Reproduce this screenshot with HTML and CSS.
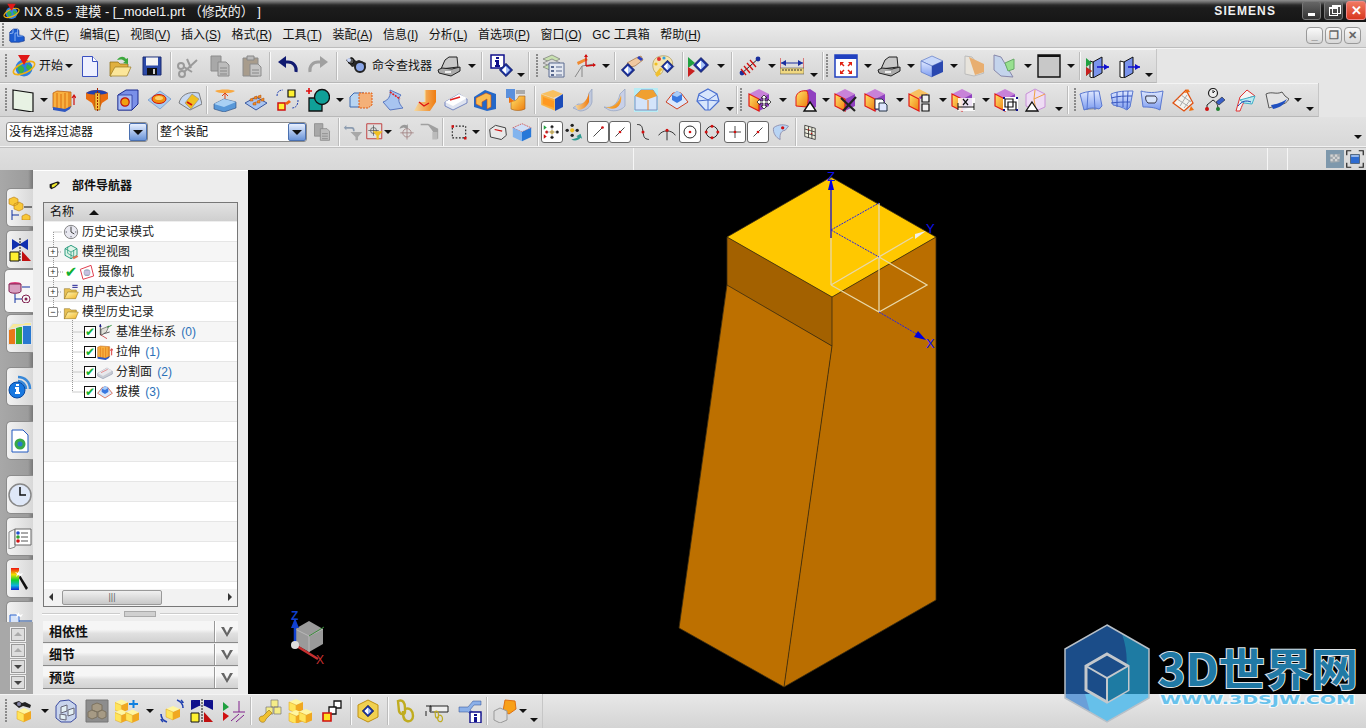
FILE: index.html
```html
<!DOCTYPE html>
<html lang="zh">
<head>
<meta charset="utf-8">
<title>NX 8.5 - 建模</title>
<link rel="stylesheet" href="styles.css">
</head>
<body>
<svg class="defs" aria-hidden="true">
<defs>
<linearGradient id="go" x1="0" y1="0" x2="1" y2="1"><stop offset="0" stop-color="#ffe468"/><stop offset="1" stop-color="#ee7c10"/></linearGradient>
<linearGradient id="gb" x1="0" y1="0" x2="1" y2="1"><stop offset="0" stop-color="#e2ecff"/><stop offset="1" stop-color="#4f7ce6"/></linearGradient>
<linearGradient id="gy" x1="0" y1="0" x2="1" y2="1"><stop offset="0" stop-color="#fff8b8"/><stop offset="1" stop-color="#f2b424"/></linearGradient>
<linearGradient id="gs" x1="0" y1="0" x2="0" y2="1"><stop offset="0" stop-color="#dfe8ff"/><stop offset="1" stop-color="#7d9cf0"/></linearGradient>
<linearGradient id="gt" x1="0" y1="0" x2="1" y2="0"><stop offset="0" stop-color="#f4d9a0"/><stop offset="1" stop-color="#f07c10"/></linearGradient>
<linearGradient id="rb" x1="0" y1="0" x2="0" y2="1"><stop offset="0" stop-color="#f01010"/><stop offset=".3" stop-color="#f0e000"/><stop offset=".55" stop-color="#10d030"/><stop offset=".8" stop-color="#10b0e0"/><stop offset="1" stop-color="#1020d0"/></linearGradient>

<symbol id="start" viewBox="0 0 24 24"><circle cx="12" cy="14" r="8.5" fill="#2f7fe0"/><path d="M6 12c3-2 5 0 6 2s-1 5-3 6c-2-1-4-5-3-8zM15 10l5 3-2 5-4-4z" fill="#38b048"/><ellipse cx="12" cy="14" rx="11.5" ry="5" fill="none" stroke="#f0b010" stroke-width="1.6" transform="rotate(-25 12 14)"/><path d="M6 1h12l-6 10z" fill="#e01818"/></symbol>
<symbol id="nxm" viewBox="0 0 24 24"><path d="M6 3h7l2 2v7l6 1 2 2v6l-8 2H3l-2-2V8z" fill="#1c5cd0" stroke="#0c2c80" stroke-width=".8"/><path d="M6 3v6l-5 1M13 9V3M9 9h4v5l8-1M9 9v12" fill="none" stroke="#a8c8f8" stroke-width="1.200"/></symbol>
<symbol id="new" viewBox="0 0 24 24"><path d="M4.500 2.500h10l5 5v15h-15z" fill="#eef0ff" stroke="#3a50c0"/><path d="M14.500 2.500v5h5" fill="#fff" stroke="#3a50c0"/></symbol>
<symbol id="open" viewBox="0 0 24 24"><path d="M2 8h8l2 2h8v4H8L4 22H2z" fill="#e0b040" stroke="#8a6a10" stroke-width=".7"/><path d="M7 13h16l-4 9H2z" fill="#fbe69a" stroke="#9a7a20" stroke-width=".7"/><path d="M9 6c3-4 7-4 9-1l2-1v6l-5-1 2-1.500C15 5 12 5 9 6z" fill="#3ca83c"/></symbol>
<symbol id="save" viewBox="0 0 24 24"><path d="M3 3h18v18H3z" fill="#2c4aa8" stroke="#1a2a70"/><path d="M6 3.500h12v8H6z" fill="#f4f4f4"/><path d="M7 14h10v7H7z" fill="#101010"/><path d="M13 15h2v5h-2z" fill="#d0d0d0"/></symbol>
<symbol id="cut" viewBox="0 0 24 24"><g fill="none" stroke="#9a9a9a" stroke-width="2"><circle cx="6" cy="20" r="3"/><circle cx="5" cy="12" r="3"/><path d="M8 18 21 6M8 13l8 5"/><path d="M11 5l4 9"/></g></symbol>
<symbol id="copy" viewBox="0 0 24 24"><path d="M3 2h10v15H3z" fill="#a8a8a8" stroke="#8c8c8c"/><path d="M10 8h8l3 3v11H10z" fill="#bcbcbc" stroke="#8c8c8c"/><path d="M12 14h7M12 17h7M12 20h7" stroke="#888"/></symbol>
<symbol id="paste" viewBox="0 0 24 24"><path d="M3 4h15v18H3z" fill="#a89c8c" stroke="#8c8c8c"/><path d="M7 2h7v4H7z" fill="#bbb" stroke="#888"/><path d="M10 10h8l3 3v9H10z" fill="#c4c4c4" stroke="#8c8c8c"/><path d="M12 16h7M12 19h7" stroke="#888"/></symbol>
<symbol id="undo" viewBox="0 0 24 24"><path d="M20 18c1-6-3-10-8-10H9" fill="none" stroke="#101a70" stroke-width="3"/><path d="M10 2v12L2 8z" fill="#101a70"/></symbol>
<symbol id="redo" viewBox="0 0 24 24"><path d="M4 18c-1-6 3-10 8-10h3" fill="none" stroke="#a0a0a0" stroke-width="3"/><path d="M14 2v12l8-6z" fill="#a0a0a0"/></symbol>
<symbol id="binoc" viewBox="0 0 24 24"><path d="M1 6l6-3 4 4 3-1 7 3-1 5-9-2-4 1z" fill="#2a2a2a"/><circle cx="6" cy="7" r="3" fill="#555" stroke="#111"/><circle cx="15" cy="13" r="5" fill="#8aa6e8" stroke="#222" stroke-width="2"/><circle cx="4" cy="6" r="2" fill="#ccd8f8"/></symbol>
<symbol id="laptop" viewBox="0 0 24 24"><path d="M4 15 8 6l4-3h8l1 10z" fill="#c8c8c8" stroke="#222"/><path d="M1 16l4-2 10 1 8-2 0 4-9 5-12-3z" fill="#aaa" stroke="#222"/><path d="M8 17h6v2H8z" fill="#eee"/></symbol>
<symbol id="dia" viewBox="0 0 24 24"><path d="M12 2 22 12 12 22 2 12z" fill="#1a2f9c" stroke="#0a1450"/><path d="M12 6l6 6-6 6-6-6z" fill="#a8c4f8"/><path d="M12 6v12l-6-6z" fill="#fff"/></symbol>
<symbol id="info" viewBox="0 0 24 24"><path d="M1 1h13v13H1z" fill="#fff" stroke="#10108c" stroke-width="1.500"/><path d="M6 3h3v2H6zM5 6h4v5h1v2H5v-2h1V8H5z" fill="#10108c"/><use href="#dia" x="8" y="8" width="16" height="16"/></symbol>
<symbol id="layers" viewBox="0 0 24 24"><path d="M2 5 11 1l8 4-8 4z" fill="#c8e0b0" stroke="#666" stroke-width=".6"/><path d="M2 9l9-4 8 4-8 4z" fill="#d8d8d8" stroke="#666" stroke-width=".6"/><path d="M2 13l9-4 8 4-8 4z" fill="#c8e0b0" stroke="#666" stroke-width=".6"/><path d="M8 9h15v14H8z" fill="#e4e8f0" stroke="#5a6a90"/><path d="M10 12h3v2h-3zM10 16h3v2h-3zM10 20h3v2h-3z" fill="#5a6a90"/><path d="M15 13h6M15 17h6M15 21h6" stroke="#5a6a90"/></symbol>
<symbol id="wcs" viewBox="0 0 24 24"><path d="M9 12V23M9 12l12-2M9 12 2 23" fill="none" stroke="#888"/><path d="M13 4 4 8l1 3 10-5z" fill="#f08a30"/><path d="M13 12V1M13 12l9-1" stroke="#d01010" stroke-width="1.300" fill="none"/><path d="M13 0l2 3h-4zM23 11l-3 2v-4z" fill="#d01010"/></symbol>
<symbol id="hand" viewBox="0 0 24 24"><path d="M7 9l9-5 5-2 2 4-4 3-4 3-5 1z" fill="#f0c8a0" stroke="#a07040" stroke-width=".7"/><path d="M19 2l4 3-2 2-4-3z" fill="#2a40c0"/><use href="#dia" x="0" y="8" width="16" height="16"/></symbol>
<symbol id="palette" viewBox="0 0 24 24"><path d="M2 9c1-6 8-8 13-7s8 6 6 10-6 1-8 3-1 5-5 5S1 15 2 9z" fill="#f4e4b0" stroke="#a08a40" stroke-width=".6"/><circle cx="8" cy="5" r="2" fill="#e03030"/><circle cx="13" cy="4" r="1.600" fill="#30a0e0"/><circle cx="5" cy="10" r="1.600" fill="#f0c020"/><use href="#dia" x="9" y="5" width="15" height="15"/><path d="M9 14l-5 6 2 3 4-3-1-2 3-3z" fill="#f0c030"/></symbol>
<symbol id="show" viewBox="0 0 24 24"><path d="M2 3l7 6-7 5z" fill="#20a040"/><path d="M2 13l7 4-7 6z" fill="#c82020"/><use href="#dia" x="6" y="2" width="18" height="18"/></symbol>
<symbol id="ant" viewBox="0 0 24 24"><path d="M3 20 21 4" stroke="#222" stroke-width="1"/><circle cx="4" cy="19" r="2.400" fill="#1a2f9c"/><circle cx="20" cy="5" r="2.400" fill="#1a2f9c"/><path d="M6 12l6 7M9 9l6 7M12 6l6 7M3 15l5 6" stroke="#d01010" stroke-width="1.300"/></symbol>
<symbol id="ruler" viewBox="0 0 24 24"><path d="M0 4v10M24 4v10" stroke="#d01010"/><path d="M1 9h22" stroke="#1a2fa0"/><path d="M1 9l5-3v6zM23 9l-5-3v6z" fill="#1a2fa0"/><path d="M0 14h24v6H0z" fill="#f0d880" stroke="#555" stroke-width=".6"/><path d="M3 15v2M6 15v2M9 15v2M12 15v2M15 15v2M18 15v2M21 15v2" stroke="#333"/></symbol>
<symbol id="fit" viewBox="0 0 24 24"><path d="M1 1h22v22H1z" fill="#fff" stroke="#2040c0" stroke-width="1.500"/><path d="M1 1h22v4H1z" fill="#2040c0"/><path d="M6 8l4 0-1.500 1.500 2 2-1 1-2-2L6 12zM18 8h-4l1.500 1.500-2 2 1 1 2-2L18 12zM6 20h4l-1.500-1.500 2-2-1-1-2 2L6 16zM18 20h-4l1.500-1.500-2-2 1-1 2 2L18 16z" fill="#e02010"/></symbol>
<symbol id="flag" viewBox="0 0 24 24"><path d="M0 0h24v24H0z" fill="#7e98ac"/><path d="M5 6l14-1-1 11-12 1z" fill="#a0a8ae"/><path d="M6 6h3v3H6zM12 6h3v3h-3zM9 9h3v3H9zM15 9h3v3h-3zM6 12h3v3H6zM12 12h3v3h-3z" fill="#d4d4d4"/></symbol>
<symbol id="frame" viewBox="0 0 24 24"><path d="M1 7V1h6M17 1h6v6M23 17v6h-6M7 23H1v-6" fill="none" stroke="#222" stroke-width="1.600"/><path d="M6 6h12v12H6z" fill="#2c6ad0" stroke="#456"/><path d="M7 7h10v2H7z" fill="#b8d0f0"/></symbol>
<symbol id="cube" viewBox="0 0 24 24"><path d="M1 7l11-5 11 5-11 5z" fill="#c8d8fa" stroke="#4a68c0" stroke-width=".6"/><path d="M1 7l11 5v11L1 18z" fill="url(#gs)" stroke="#4a68c0" stroke-width=".6"/><path d="M12 12l11-5v11l-11 5z" fill="#2a48b0"/></symbol>
<symbol id="sec1" viewBox="0 0 24 24"><path d="M3 2l7 1 12 16-10 3-9-2z" fill="#e8e4dc" stroke="#bbb"/><path d="M7 3l15 7v8l-9 3z" fill="#e8ae70"/></symbol>
<symbol id="sec2" viewBox="0 0 24 24"><path d="M2 1l7 2 12 20-12-1-7-6z" fill="#c4d4ec" stroke="#88a"/><path d="M13 9l9-4v10l-6 2z" fill="#98e090" stroke="#6a6"/></symbol>
<symbol id="rect" viewBox="0 0 24 24"><path d="M1 1h22v22H1z" fill="#c8c8c8" stroke="#111" stroke-width="1.400"/><path d="M1 1h22v2H1z" fill="#111"/></symbol>
<symbol id="cl1" viewBox="0 0 24 24"><path d="M7 8l9-5v16l-9 5z" fill="#7a94ec" stroke="#111"/><path d="M7 8l-3-1v16l3 1z" fill="#fff" stroke="#111"/><path d="M0 4l6 5-6 4zM0 13l6 4-6 5z" fill="#20a040"/><path d="M0 13l6 4-6 5z" fill="#c82020"/><path d="M11 13h12" stroke="#1010d0" stroke-width="1.500"/><path d="M23 13l-5-3v6z" fill="#1010d0"/></symbol>
<symbol id="cl2" viewBox="0 0 24 24"><path d="M7 8l9-5v16l-9 5z" fill="#7a94ec" stroke="#111"/><path d="M7 8l-4-1v16l4 1z" fill="#fff" stroke="#111"/><path d="M11 13h12" stroke="#1010d0" stroke-width="1.500"/><path d="M23 13l-5-3v6z" fill="#1010d0"/></symbol>

<symbol id="plane" viewBox="0 0 24 24"><path d="M2 2l20 3v19L2 21z" fill="#e8f2e4" stroke="#111" stroke-width="1.200"/></symbol>
<symbol id="ext" viewBox="0 0 24 24"><path d="M1 5l4-2 14 1v15l-6 3-12-2z" fill="#f8b040" stroke="#b85000" stroke-width=".7"/><path d="M5 5v15M9 6v15M13 5v17M17 4v16" stroke="#d86808" stroke-width=".9"/><path d="M1 19l12 2 6-3-1 3-5 3-12-2z" fill="#3058c0"/><path d="M22 8v9M24 10l-2-3-2 3" stroke="#d01010" stroke-width="1.200" fill="none"/></symbol>
<symbol id="rev" viewBox="0 0 24 24"><path d="M1 5c5-4 17-4 22 0v6l-6 4-3 7h-4l-3-7-6-4z" fill="#e86c10"/><path d="M1 5c5-4 17-4 22 0-5 2-17 2-22 0z" fill="#2040b0"/><path d="M10 5h5v17h-5z" fill="#f8c040" stroke="#8a5000" stroke-width=".6"/><path d="M12.500 0v24" stroke="#a02000" stroke-dasharray="2 1"/></symbol>
<symbol id="hole" viewBox="0 0 24 24"><path d="M2 7l8-5h12v14l-6 6H2z" fill="#7a90e8" stroke="#1a2a90"/><path d="M2 7h14v15H2z" fill="#a8bcf4" stroke="#1a2a90" stroke-width=".7"/><circle cx="9" cy="14" r="4.200" fill="#f0a010" stroke="#c01010" stroke-width="1.200"/></symbol>
<symbol id="boss" viewBox="0 0 24 24"><path d="M1 12 13 3l11 8-11 10z" fill="#a8ccf0" stroke="#6a90c8" stroke-width=".7"/><ellipse cx="12" cy="11" rx="7" ry="4.500" fill="#f09010" stroke="#d01010"/><ellipse cx="12" cy="10" rx="4" ry="2" fill="#fbd070"/></symbol>
<symbol id="pocket" viewBox="0 0 24 24"><path d="M1 15c2-8 9-12 20-10l3 11-12 6z" fill="#c8d8f0" stroke="#666" stroke-width=".8"/><path d="M14 6l7 5-8 10-6-6z" fill="#f0c020" stroke="#888" stroke-width=".6"/><path d="M9 14l5 3" stroke="#d01010" stroke-width="2"/></symbol>
<symbol id="emb" viewBox="0 0 24 24"><path d="M2 3c4-2 16-2 20 0-4 3-16 3-20 0z" fill="#f8a840"/><path d="M12 5v6M12 5l-3 3M12 5l3 3" stroke="#e04010"/><path d="M1 16l10-5 12 3v6l-12 4-10-3z" fill="#5898d8" stroke="#284878" stroke-width=".6"/><path d="M1 16l10 3 12-5-12-3z" fill="#a8d0f4"/></symbol>
<symbol id="pads" viewBox="0 0 24 24"><path d="M1 15 12 9l11 6-11 7z" fill="#a8c4f0" stroke="#3a58a0"/><g fill="#f08a20" stroke="#b05010" stroke-width=".5"><path d="M6 11l3-1v3H6zM10 9l3-1v3h-3zM14 8l3-1v3h-3zM9 15l3-1v3H9zM13 13l3-1v3h-3zM17 11l3-1v3h-3z"/></g></symbol>
<symbol id="move" viewBox="0 0 24 24"><path d="M3 15h7v7H3z" fill="#fff030" stroke="#d01010" stroke-width="1.500"/><path d="M13 2h7v7h-7z" fill="#fff030" stroke="#111" stroke-width="1.200"/><path d="M10 15l4-3 2 2-4 3z" fill="#f06010"/><path d="M2 8c0-4 2-6 6-6M23 12c0 5-2 8-6 8" fill="none" stroke="#2040b0" stroke-dasharray="2 1"/></symbol>
<symbol id="unite" viewBox="0 0 24 24"><path d="M0 3h6M3 0v6" stroke="#e01010" stroke-width="1.600"/><path d="M3 10h13v13H3z" fill="#10a098" stroke="#111" stroke-width="1.300"/><circle cx="16" cy="9" r="7.500" fill="#10a098" stroke="#111" stroke-width="1.300"/></symbol>
<symbol id="trim" viewBox="0 0 24 24"><path d="M1 9l4-4h10v14H1z" fill="#b8d4f0" stroke="#3a68b0"/><path d="M10 5h13v12l-4 3H10z" fill="#f4b078" stroke="#e05a10" stroke-dasharray="2 1"/></symbol>
<symbol id="swp" viewBox="0 0 24 24"><path d="M9 2l11 5c-4 4-2 9 2 13L9 22 2 14C8 12 10 7 9 2z" fill="#a8c4f0" stroke="#5a78c0"/><path d="M9 4l10 7" stroke="#e02020" stroke-dasharray="2 1" stroke-width="1.600"/></symbol>
<symbol id="sweep" viewBox="0 0 24 24"><path d="M12 2h11v12l-6 9H1l5-9h6z" fill="url(#gt)"/><path d="M6 14l5 4 5-3" fill="none" stroke="#e01010" stroke-width="1.300"/><path d="M12 2v12" stroke="#f8e0a0"/></symbol>
<symbol id="split" viewBox="0 0 24 24"><path d="M1 14l14-8 8 5v4L9 22l-8-4z" fill="#dfe4f0" stroke="#5a70b8" stroke-width=".8"/><path d="M1 14l8 4 14-8-8-4z" fill="#fff"/><path d="M6 12l10-3" stroke="#e02020" stroke-width="1.500"/></symbol>
<symbol id="shell" viewBox="0 0 24 24"><path d="M1 9l11-7 11 4v15l-9 2-13-4z" fill="#2468c8"/><path d="M3 10l10-5 5 2v12l-4 2V11l-5 3v5l-6-3z" fill="#fbbc50" stroke="#d05010" stroke-width=".6"/></symbol>
<symbol id="thk" viewBox="0 0 24 24"><path d="M3 1h9v12l-5-3H3z" fill="#5a90dc"/><path d="M13 2h9v4h-9z" fill="#aaa"/><path d="M8 12c4 2 6 0 8-4h6v13c-4 2-10 2-14 0z" fill="url(#go)" stroke="#a06020" stroke-width=".6"/><path d="M6 9l5 4-5 2z" fill="#f07010"/></symbol>
<symbol id="box1" viewBox="0 0 24 24"><path d="M1 6l12-4 10 4-10 4z" fill="#f8c060"/><path d="M1 6l14 5v12L1 17z" fill="#f8b040" stroke="#f0f0f0" stroke-width=".3"/><path d="M3 9l11 4v7L3 16z" fill="#ff9820"/><path d="M15 11l8-5v13l-8 4z" fill="#1c4cb8"/></symbol>
<symbol id="fl1" viewBox="0 0 24 24"><path d="M1 20l5-4c6 1 10-3 11-11l3-4v13c-1 5-6 9-12 9z" fill="#c0c8dc" stroke="#90a0c0" stroke-width=".7"/><path d="M3 17c7 1 12-4 14-12v9c-2 5-7 8-11 8z" fill="url(#gt)"/></symbol>
<symbol id="fl2" viewBox="0 0 24 24"><path d="M1 19c8 2 14-3 16-13l5-5v17c-3 4-10 6-16 4z" fill="#c8d0e8" stroke="#90a0c0" stroke-width=".7"/><path d="M3 19c7 1 13-4 15-12 1 6-1 11-5 13-3 1-7 1-10-1z" fill="url(#go)"/></symbol>
<symbol id="chm" viewBox="0 0 24 24"><path d="M0 0h24v24H0z" fill="#b8ecf4"/><path d="M1 8l6-6h12l4 6v14H1z" fill="#d4e4fa" stroke="#7a90c0"/><path d="M1 8l6-6h12l4 6-11 4z" fill="#f0a030"/><path d="M14 12v10" stroke="#f08020"/></symbol>
<symbol id="draft" viewBox="0 0 24 24"><path d="M1 14l7-9h8l7 9-11 7z" fill="#dce8fa" stroke="#d04020"/><path d="M7 7l5-4 5 3v6l-5 3-5-3z" fill="#3a78e0"/><path d="M7 7l5 2 5-3-5-3z" fill="#a8ccf8"/></symbol>
<symbol id="poly" viewBox="0 0 24 24"><path d="M12 1l9 5 2 7-9 9-5 0-8-9 2-7z" fill="#d8e6fc" stroke="#4a70d0" stroke-width="1.200"/><path d="M3 7l9 5 9-6M12 12v10M1 13l11-1 11 1" fill="none" stroke="#4a70d0"/></symbol>

<symbol id="pb" viewBox="0 0 24 24"><path d="M1 6l10-5 10 5-10 5z" fill="#c882d8"/><path d="M11 11l10-5v12l-10 5z" fill="#9040c0"/><path d="M1 6l10 5v12L1 18z" fill="url(#go)" stroke="#e01818" stroke-width="1.200"/></symbol>
<symbol id="pmove" viewBox="0 0 24 24"><use href="#pb"/><path d="M16 7l3 3h-2v3h3v-2l3 3-3 3v-2h-3v3h2l-3 3-3-3h2v-3h-3v2l-3-3 3-3v2h3v-3h-2z" fill="#fff" stroke="#222" stroke-width=".8"/></symbol>
<symbol id="ptri" viewBox="0 0 24 24"><path d="M10 3 17 1l6 4v14l-6 3z" fill="#9040c0"/><path d="M3 9c1-5 6-7 11-6 2 4 1 12 0 16L3 18z" fill="url(#go)" stroke="#e01818"/><path d="M17 14l6 9H11z" fill="#fff" stroke="#111" stroke-width="1.400"/></symbol>
<symbol id="px" viewBox="0 0 24 24"><use href="#pb"/><path d="M7 10l14 13M22 9 9 23" stroke="#222" stroke-width="2.200"/></symbol>
<symbol id="pcopy" viewBox="0 0 24 24"><use href="#pb"/><path d="M11 11h7l2 2v8h-9z" fill="#fff" stroke="#234"/><path d="M15 15h6l2 2v6h-8z" fill="#dfe6ff" stroke="#234"/></symbol>
<symbol id="psq" viewBox="0 0 24 24"><path d="M1 6l10-5 10 5-10 5z" fill="#f8c060"/><path d="M1 6l10 5v12L1 18z" fill="url(#go)" stroke="#e01818" stroke-width="1.200"/><path d="M11 9l8-3v2l-7 3z" fill="#9040c0"/><path d="M14 7h7v7h-7zM14 16h7v7h-7z" fill="#f0f0f0" stroke="#111" stroke-width="1.200"/></symbol>
<symbol id="pdim" viewBox="0 0 24 24"><use href="#pb"/><path d="M7 10h17v13H7z" fill="#fff" fill-opacity=".85"/><path d="M12 11l5 6M17 11l-5 6" stroke="#111" stroke-width="1.200"/><path d="M7 15v7M23 15v7M7 19h16" stroke="#111"/></symbol>
<symbol id="pfr" viewBox="0 0 24 24"><use href="#pb"/><path d="M9 9h15v14H9z" fill="#fff"/><path d="M11 11h8v8h-8zM14 14h8v8h-8z" fill="none" stroke="#111" stroke-width="1.200"/><path d="M9 9h2v2H9zM22 9h2v2h-2zM9 21h2v2H9zM22 21h2v2h-2z" fill="#10108c"/></symbol>
<symbol id="pwire" viewBox="0 0 24 24"><path d="M3 6l9-5 10 5v13l-9 4-10-5z" fill="#eedcf4" stroke="#c890d8"/><path d="M12 2l-1 9 11-5M11 11l2 12" stroke="#f0a040" fill="none"/><path d="M9 14l6 9H3z" fill="#fff" stroke="#111" stroke-width="1.300"/></symbol>

<symbol id="s1" viewBox="0 0 24 24"><path d="M5 22l16-1 2-3H6z" fill="#999"/><path d="M1 6c7-3 14-3 19-3l3 15-3 3c-5-2-10-1-15 1z" fill="url(#gs)" stroke="#5a78d0"/><path d="M9 4l-1 18M15 3l1 19" stroke="#5a78d0"/></symbol>
<symbol id="s2" viewBox="0 0 24 24"><path d="M1 6c7-3 14-3 22-3l-3 16-3 3c-5-3-9-4-14-5z" fill="url(#gs)" stroke="#5a78d0"/><path d="M7 4v15M13 3v16M18 3l-1 18M1 10c7-2 14-2 21-2M1 15c7-1 13-1 19-1" stroke="#3a58c0" fill="none"/></symbol>
<symbol id="s3" viewBox="0 0 24 24"><path d="M1 3c7 2 14 2 22 0l-3 19c-6-3-12-3-17-3z" fill="url(#gs)" stroke="#5a78d0"/><path d="M6 8h9c3 2 2 5 0 7H8c-2-2-3-4-2-7z" fill="#d8e4fa" stroke="#334"/></symbol>
<symbol id="s4" viewBox="0 0 24 24"><path d="M2 15 15 2l7 13-9 8z" fill="#f4f4f0" stroke="#e05010" stroke-width="1.300"/><path d="M6 11l11 7M10 7l10 7M9 18l7-11M13 20l7-9" stroke="#aaa"/><path d="M13 5l4-4 2 3zM20 18l3 4-5 1z" fill="#f07010"/></symbol>
<symbol id="s5" viewBox="0 0 24 24"><circle cx="11" cy="5" r="4.500" fill="#eee" stroke="#222" stroke-width="1.200"/><path d="M11 2v3l2-2" stroke="#222" fill="none"/><path d="M11 12l-6 5v4M11 12c3 2 5 4 5 9" stroke="#222" fill="none"/><circle cx="5" cy="21" r="2" fill="#d01010"/><circle cx="16" cy="21" r="2" fill="#208030"/><path d="M14 14l6-5 3 3-6 5z" fill="#3a60c8" stroke="#111" stroke-width=".5"/></symbol>
<symbol id="s6" viewBox="0 0 24 24"><path d="M2 23 6 9l7-7 8 6-7 2c-5 4-6 8-8 13z" fill="#f4f4f4" stroke="#e03030"/><path d="M6 12 21 8l-3 8-8-1z" fill="#bcecf0" stroke="#40b0c8"/><path d="M4 18c4-5 8-6 13-4" fill="none" stroke="#2040b0"/></symbol>
<symbol id="s7" viewBox="0 0 24 24"><path d="M1 6c6-3 10 1 16-2l3 4 4 3c-4 7-10 5-15 7-2 1-5 2-5 2z" fill="#e4e4e4" stroke="#555"/><path d="M6 17c5-1 8-1 16-6-3 6-8 9-14 10z" fill="#2050c0"/></symbol>

<symbol id="link" viewBox="0 0 24 24"><path d="M4 2c5-2 7 2 7 7v4c0 3-5 3-6-1zM11 10c5-2 8 2 8 7 0 4-3 6-6 5-4-1-4-6-4-10" fill="none" stroke="#c0ac20" stroke-width="2.400"/></symbol>
<symbol id="flt" viewBox="0 0 24 24"><path d="M5 7h18v6H5z" fill="#eee" stroke="#222"/><path d="M1 7h5v5M1 12v5" fill="none" stroke="#222"/><use href="#link" x="8" y="11" width="12" height="13"/></symbol>
<symbol id="tree" viewBox="0 0 24 24"><path d="M1 8h9l5-6h8v4h-7l-4 5 4 3h7v3h-8l-5-4H1z" fill="#8cb0e8" stroke="#2a4a90" stroke-width=".5"/><path d="M12 13h11v11H12z" fill="#fff" stroke="#10108c" stroke-width="1.400"/><path d="M16 15h3v2h-3zM16 18h3v5h-3z" fill="#10108c"/></symbol>
<symbol id="yc" viewBox="0 0 24 24"><path d="M5 12l7-3 7 3-7 3z" fill="#fff6a0"/><path d="M5 12l7 3v8l-7-3z" fill="#ffe45a" stroke="#e0a010" stroke-width=".5"/><path d="M12 15l7-3v8l-7 3z" fill="#f0a820"/></symbol>
<symbol id="bfind" viewBox="0 0 24 24"><use href="#yc"/><path d="M1 4l6-2 3 2 3-1 6 3-1 3-7-2-4 2z" fill="#222"/><circle cx="7" cy="5" r="2" fill="#88a"/></symbol>
<symbol id="blk" viewBox="0 0 24 24"><path d="M6 2l9-1 7 5v13l-5 4H7l-5-4V7z" fill="#c8d4ec" stroke="#3a4aa0"/><path d="M7 8l6-2v6l-6 2zM14 11l6-2v6l-6 2zM6 15l6 1v5l-6-1z" fill="#e4f0f4" stroke="#667"/></symbol>
<symbol id="grp" viewBox="0 0 24 24"><path d="M1 1h22v22H1z" fill="#8d8d8d" stroke="#777"/><path d="M7 6l5-2 5 2v5l-5 2-5-2zM3 13l4-2 5 2v5l-5 2-4-2zM13 13l4-2 4 2v5l-4 2-4-2z" fill="#a69a84" stroke="#7d7360"/></symbol>
<symbol id="plus2" viewBox="0 0 24 24"><g transform="translate(-5 -8) scale(.95)"><use href="#yc"/></g><g transform="translate(-5 2) scale(.95)"><use href="#yc"/></g><g transform="translate(6 2) scale(.95)"><use href="#yc"/></g><path d="M14 5h9M18.500 1v8" stroke="#1080e0" stroke-width="2"/></symbol>
<symbol id="ymove" viewBox="0 0 24 24"><g transform="translate(1 -2)"><use href="#yc"/></g><path d="M17 1c3 1 6 4 6 8M21 1c1 1 2 2 2 3M1 15c0 4 3 7 6 8M1 20c0 1 1 2 2 3" fill="none" stroke="#2040b0" stroke-width="1.600"/></symbol>
<symbol id="mir" viewBox="0 0 24 24"><path d="M1 1l9 6 0-6zM23 1l-9 6 0-6z" fill="#10108c"/><path d="M1 1l10 5-10 5zM23 1 13 6l10 5z" fill="#10108c"/><path d="M12 0v24" stroke="#111" stroke-dasharray="2 1"/><path d="M1 14h8v9H1z" fill="#fff030" stroke="#111"/><path d="M14 13v10h9z" fill="#c01010"/></symbol>
<symbol id="asm" viewBox="0 0 24 24"><path d="M2 3l6 5-6 4z" fill="#20a040"/><path d="M2 13l6 4-6 5z" fill="#d01010"/><path d="M18 2v11M12 13h12M10 22l8-7M15 23l8-7" stroke="#80208c" fill="none"/></symbol>
<symbol id="wren" viewBox="0 0 24 24"><path d="M13 1h7v7h-7zM8 8h7v7H8zM16 8h7v7h-7z" fill="#f4ec88" stroke="#777" stroke-width=".7"/><path d="M2 22c-2-3 0-5 3-5l6-6 3 3-6 6c-1 4-4 4-6 2z" fill="#f0c030" stroke="#9a7010" stroke-width=".6"/></symbol>
<symbol id="tri" viewBox="0 0 24 24"><g transform="translate(-4 -9)"><use href="#yc"/></g><g transform="translate(-4 2)"><use href="#yc"/></g><g transform="translate(6 1)"><use href="#yc"/></g></symbol>
<symbol id="stp" viewBox="0 0 24 24"><path d="M14 2h7v7h-7z" fill="#fff" stroke="#111" stroke-width="1.300"/><path d="M9 8h7v7H9z" fill="#fff" stroke="#111" stroke-width="1.300"/><path d="M3 14h8v8H3z" fill="#ffe020" stroke="#d01010" stroke-width="1.600"/></symbol>
<symbol id="hexd" viewBox="0 0 24 24"><path d="M12 1l10 5v12l-10 5L2 18V6z" fill="#f0d050" stroke="#c09010"/><use href="#dia" x="5" y="5" width="14" height="14"/></symbol>
<symbol id="two" viewBox="0 0 24 24"><path d="M12 1l10 1 1 8-7 5-6-3z" fill="#f8a018" stroke="#e07010"/><path d="M1 12l6-3 7 3v9l-7 3-6-3z" fill="#dcdcdc" stroke="#999"/></symbol>

<symbol id="funnel" viewBox="0 0 24 24"><path d="M9 12h14l-5 6v4h-3v-4z" fill="#a8a8a8"/><path d="M4 4l-3 3 3 3V8h6c2 0 2 1 2 3h2c0-4-1-5-4-5H4z" fill="#8c9cb0"/></symbol>
<symbol id="fbox" viewBox="0 0 24 24"><path d="M1 1h20v20H1z" fill="#e0e0e0" stroke="#c04040" stroke-width="1.300"/><circle cx="10" cy="10" r="4" fill="none" stroke="#555"/><path d="M10 3v14M3 10h14" stroke="#555"/><path d="M9 11h13l-5 6v5h-3v-5z" fill="#f0c020"/></symbol>
<symbol id="cross" viewBox="0 0 24 24"><circle cx="12" cy="13" r="5" fill="none" stroke="#a08080"/><path d="M12 5v16M4 13h16" stroke="#a08080"/><path d="M3 8c1-4 6-6 9-4l1-2v6l-5-1 2-1" fill="#999"/></symbol>
<symbol id="pipe" viewBox="0 0 24 24"><path d="M2 4h9l4 5 2 3v8h6V8l-8-4-4-2H2z" fill="#a0a0a0"/><path d="M16 12h6v9h-6z" fill="#bbb"/></symbol>
<symbol id="dash" viewBox="0 0 24 24"><path d="M4 5h16v14H4z" fill="none" stroke="#222" stroke-dasharray="2 2" stroke-width="1.400"/><path d="M3 4h3v3H3zM18 18h3v3h-3z" fill="#d01010"/></symbol>
<symbol id="gbox" viewBox="0 0 24 24"><path d="M2 9l7-5 12 3 1 9-6 5-13-3z" fill="#e8e8e8" stroke="#444" stroke-width="1.200"/><path d="M8 9l9 2" stroke="#d01010" stroke-width="1.500"/></symbol>
<symbol id="bbox" viewBox="0 0 24 24"><path d="M1 7l11-5 11 5-11 5z" fill="#cfe0f8" stroke="#d05050" stroke-dasharray="2 1"/><path d="M1 7l11 5v11L1 18z" fill="#82b4ee"/><path d="M12 12l11-5v11l-11 5z" fill="#2878d8"/></symbol>
<symbol id="all" viewBox="0 0 24 24"><circle cx="5" cy="12" r="2" fill="#d01010"/><circle cx="19" cy="12" r="2" fill="#111"/><circle cx="12" cy="5" r="2" fill="#111"/><circle cx="12" cy="19" r="2" fill="#111"/><circle cx="12" cy="12" r="2.500" fill="#f0c020"/><path d="M1 3l4 3-4 3z" fill="#20a040"/><path d="M1 15l4 3-4 3z" fill="#d01010"/><path d="M5 12h14M12 5v14" stroke="#999"/></symbol>
<symbol id="all2" viewBox="0 0 24 24"><circle cx="5" cy="10" r="2" fill="#222"/><circle cx="17" cy="10" r="2" fill="#222"/><circle cx="11" cy="4" r="2" fill="#222"/><circle cx="11" cy="16" r="2" fill="#222"/><circle cx="11" cy="10" r="2.500" fill="#f0c020"/><path d="M10 21c3 2 8 2 11-2l2 1-2-6-5 3 2 1c-2 2-5 2-8 3z" fill="#309a90"/></symbol>
<symbol id="lnA" viewBox="0 0 24 24"><path d="M6 18 18 6" stroke="#111"/><circle cx="18" cy="6" r="1.800" fill="#d01010"/></symbol>
<symbol id="lnM" viewBox="0 0 24 24"><path d="M6 18 18 6" stroke="#111"/><circle cx="12" cy="12" r="1.800" fill="#d01010"/></symbol>
<symbol id="crv" viewBox="0 0 24 24"><path d="M5 3c6 0 6 3 7 9s1 8 7 9" fill="none" stroke="#111"/><circle cx="12" cy="12" r="1.800" fill="#d01010"/></symbol>
<symbol id="arc" viewBox="0 0 24 24"><path d="M2 16c4-7 16-7 20 0M12 9v13" fill="none" stroke="#111"/><circle cx="12" cy="10" r="1.800" fill="#d01010"/></symbol>
<symbol id="cen" viewBox="0 0 24 24"><circle cx="12" cy="12" r="8" fill="none" stroke="#111" stroke-width="1.200"/><circle cx="12" cy="12" r="1.800" fill="#d01010"/></symbol>
<symbol id="qua" viewBox="0 0 24 24"><circle cx="12" cy="12" r="7" fill="none" stroke="#222" stroke-width="1.200"/><g fill="#d01010"><circle cx="12" cy="5" r="1.800"/><circle cx="12" cy="19" r="1.800"/><circle cx="5" cy="12" r="1.800"/><circle cx="19" cy="12" r="1.800"/></g></symbol>
<symbol id="isc" viewBox="0 0 24 24"><path d="M12 4v16M4 12h16" stroke="#111"/><circle cx="12" cy="12" r="1.800" fill="#d01010"/></symbol>
<symbol id="fac" viewBox="0 0 24 24"><path d="M3 7c6-5 14-4 18-2l-4 5c-4 0-7 4-6 11-5-2-9-8-8-14z" fill="#b8d4f4" stroke="#88a"/><circle cx="14" cy="7" r="2" fill="#d01010"/></symbol>
<symbol id="grid" viewBox="0 0 24 24"><path d="M5 3l14 4v15L5 18z" fill="#f0f0e0" stroke="#222"/><path d="M10 4.500v15M14.500 6v15M5 8l14 4M5 13l14 4" stroke="#222"/><circle cx="10" cy="9" r="1" fill="#d01010"/><circle cx="14" cy="14" r="1" fill="#d01010"/></symbol>

<symbol id="t1" viewBox="0 0 24 24"><path d="M1 3l5-2 4 2v5l-4 2-5-2zM6 8l5-2 4 2v5l-4 2-5-2z" fill="#f8c838" stroke="#b87810" stroke-width=".6"/><path d="M4 14v10M4 19h7" stroke="#1030a0"/><path d="M14 20l4-2 4 2v4h-8z" fill="#f8c838" stroke="#b87810" stroke-width=".6"/><path d="M16 11h8" stroke="#111"/></symbol>
<symbol id="t2" viewBox="0 0 24 24"><path d="M4 1l8 5 8-5v11l-8-5-8 5z" fill="#1030b0"/><path d="M12 0v24" stroke="#111" stroke-dasharray="2 1"/><path d="M2 14h9v9H2z" fill="#fff030" stroke="#111"/><path d="M14 13v10h9z" fill="#c01010"/></symbol>
<symbol id="t3" viewBox="0 0 24 24"><ellipse cx="8" cy="5" rx="6" ry="2" fill="#e04080"/><path d="M2 5h12v7c0 3-12 3-12 0z" fill="#d8a0c0" stroke="#802050"/><path d="M15 8h8M8 15v9M8 20h7" stroke="#1030a0"/><circle cx="19" cy="20" r="4" fill="none" stroke="#802050"/><circle cx="19" cy="20" r="1.500" fill="#802050"/></symbol>
<symbol id="t4" viewBox="0 0 24 24"><path d="M1 7h7v15H1z" fill="#e87818"/><path d="M8 5h7v17H8z" fill="#38b030"/><path d="M15 3h8v19h-8z" fill="#2878d0"/><path d="M1 7l4-5h7l-4 3zM8 5l4-3h4l-1 1zM15 3l2-2h6v2z" fill="#f8e898"/></symbol>
<symbol id="t5" viewBox="0 0 24 24"><path d="M10 2c7 0 12 5 12 12M10 6c5 0 8 4 8 8" fill="none" stroke="#3888d8" stroke-width="2.500"/><circle cx="9" cy="15" r="8" fill="#1878e0" stroke="#0848a0"/><path d="M8 9h3v2H8zM7 12h4v5h1v2H7v-2h1v-3H7z" fill="#fff"/></symbol>
<symbol id="t6" viewBox="0 0 24 24"><path d="M4 1h11l5 5v17H4z" fill="#fff" stroke="#2058c0"/><circle cx="12" cy="15" r="5.500" fill="#38a848"/><circle cx="12" cy="15" r="2.500" fill="#2878d0"/></symbol>
<symbol id="t7" viewBox="0 0 24 24"><circle cx="12" cy="12" r="11" fill="#dfe8f8" stroke="#888" stroke-width="1.500"/><path d="M12 4v8h6" fill="none" stroke="#111" stroke-width="1.500"/></symbol>
<symbol id="t8" viewBox="0 0 24 24"><path d="M1 7l6-3v18l-6 2z" fill="#f4f4f4" stroke="#888"/><path d="M7 4h16v16H7z" fill="#fff" stroke="#666"/><circle cx="10" cy="8" r="1.800" fill="#2050d0"/><circle cx="10" cy="12" r="1.800" fill="#30a030"/><circle cx="10" cy="16" r="1.800" fill="#d01010"/><path d="M13 8h7M13 12h7M13 16h7" stroke="#555"/></symbol>
<symbol id="t9" viewBox="0 0 24 24"><path d="M3 1h8v22H3z" fill="url(#rb)"/><path d="M12 8l8 13-2 2-7-12z" fill="#111"/><path d="M10 4l2 3 3-1-2 3-3-1-2 2 1-3-2-2 3 1z" fill="#fff"/></symbol>
<symbol id="t10" viewBox="0 0 24 24"><path d="M2 6h9v12H2z" fill="#d8e4f8" stroke="#3068d0"/><path d="M11 12h13" stroke="#2050a0"/><path d="M10 3l2 3 3-1-2 3-3-1-2 2 1-3-2-2 3 1z" fill="#fff"/></symbol>
<symbol id="tc" viewBox="0 0 24 24"><circle cx="12" cy="12" r="10" fill="#e8e8f0" stroke="#777" stroke-width="1.300"/><path d="M12 4v8l5 3" fill="none" stroke="#222" stroke-width="1.300"/><path d="M4 12h2M18 12h2M12 18v2" stroke="#223"/></symbol>
<symbol id="cam" viewBox="0 0 24 24"><path d="M2 8l16-6 4 16-16 5z" fill="#fff" stroke="#e04050" stroke-width="1.500"/><circle cx="12" cy="13" r="5" fill="#9ab"/><path d="M8 10h8v6H8z" fill="#c8c0e0"/></symbol>
<symbol id="view3" viewBox="0 0 24 24"><path d="M12 2l9 5v10l-9 5-9-5V7z" fill="#e0f4e8" stroke="#109070" stroke-width="1.300"/><path d="M3 7l9 5 9-5M12 12v10M7 4v10l9 5V9" fill="none" stroke="#109070"/><path d="M14 20l7-3 2 2-7 4z" fill="#e07050"/></symbol>
<symbol id="folder" viewBox="0 0 24 24"><path d="M2 7h8l2 2h8v5H7L3 22H2z" fill="#e8c050" stroke="#806010" stroke-width=".7"/><path d="M7 12h16l-4 10H2z" fill="url(#gy)" stroke="#806010" stroke-width=".7"/></symbol>
<symbol id="fldexp" viewBox="0 0 24 24"><use href="#folder"/><path d="M14 2h8M14 5h8" stroke="#10108c" stroke-width="1.400"/></symbol>
<symbol id="datum" viewBox="0 0 24 24"><path d="M5 0v16l14-4" fill="none" stroke="#111"/><path d="M5 0 3 4h4z" fill="#10108c"/><path d="M5 16l10 6" stroke="#c01010"/><path d="M6 8l12-5-4 9-8 5z" fill="#e0e0d8" stroke="#333" stroke-width=".8"/><path d="M15 5l7-3" stroke="#209030" stroke-width="1.300"/></symbol>
<symbol id="split2" viewBox="0 0 24 24"><path d="M1 14l14-8 8 5v4L9 22l-8-4z" fill="#c8ccd4" stroke="#8890a8" stroke-width=".8"/><path d="M1 14l8 4 14-8-8-4z" fill="#e8e8ec"/><path d="M6 13l10-5" stroke="#e06060"/></symbol>
<symbol id="nav" viewBox="0 0 24 24"><path d="M3 8 16 3c4-1 7 1 5 4l-8 7-7 3-3-3z" fill="#1a1a1a"/><path d="M7 9l7-3c3-1 4 1 3 2l-6 5-4 1z" fill="#f0ea30"/></symbol>
</defs>
</svg>

<div class="app">
<header class="title">
  <svg class="ti"><use href="#start"/></svg>
  <span class="tt">NX 8.5 - 建模 - [_model1.prt （修改的） ]</span>
  <span class="sm">SIEMENS</span>
  <span class="wb">
    <span class="wbtn wmin"></span>
    <span class="wbtn wres"></span>
    <span class="wbtn wcl">✕</span>
  </span>
</header>

<nav class="menu">
  <span class="grip w9"></span>
  <svg class="mi"><use href="#nxm"/></svg>
  <span class="ms">
    <span>文件(<u>F</u>)</span><span>编辑(<u>E</u>)</span><span>视图(<u>V</u>)</span><span>插入(<u>S</u>)</span><span>格式(<u>R</u>)</span><span>工具(<u>T</u>)</span><span>装配(<u>A</u>)</span><span>信息(<u>I</u>)</span><span>分析(<u>L</u>)</span><span>首选项(<u>P</u>)</span><span>窗口(<u>O</u>)</span><span>GC 工具箱</span><span>帮助(<u>H</u>)</span>
  </span>
  <span class="mdi"><span class="mb">_</span><span class="mb">❐</span><span class="mb">✕</span></span>
</nav>

<div class="row r34">
  <div class="bar">
    <span class="grip w7"></span>
    <span class="s w28"><svg class="i"><use href="#start"/></svg></span><span class="lb w26">开始</span><span class="c w10"></span>
    <span class="s w32"><svg class="i"><use href="#new"/></svg></span><span class="s w28"><svg class="i"><use href="#open"/></svg></span><span class="s w36"><svg class="i"><use href="#save"/></svg></span>
    <span class="sep w2"></span>
    <span class="s w32"><svg class="i"><use href="#cut"/></svg></span><span class="s w32"><svg class="i"><use href="#copy"/></svg></span><span class="s w32"><svg class="i"><use href="#paste"/></svg></span>
    <span class="sep w4"></span>
    <span class="s w32"><svg class="i"><use href="#undo"/></svg></span><span class="s w28"><svg class="i"><use href="#redo"/></svg></span>
    <span class="sep w10"></span>
    <span class="s w30"><svg class="i"><use href="#binoc"/></svg></span><span class="lb w60">命令查找器</span>
    <span class="s w34"><svg class="i"><use href="#laptop"/></svg></span><span class="c w12"></span>
    <span class="sep w8"></span>
    <span class="s w32"><svg class="i"><use href="#info"/></svg></span><span class="c cl w6"></span>
    <span class="sep w10"></span><span class="grip w4"></span>
    <span class="s w30"><svg class="i"><use href="#layers"/></svg></span><span class="s w34"><svg class="i"><use href="#wcs"/></svg></span><span class="c w8"></span>
    <span class="sep w10"></span>
    <span class="s w24"><svg class="i"><use href="#hand"/></svg></span><span class="s w38"><svg class="i"><use href="#palette"/></svg></span>
    <span class="sep w2"></span>
    <span class="s w28"><svg class="i"><use href="#show"/></svg></span><span class="c w18"></span>
    <span class="sep w4"></span>
    <span class="s w32"><svg class="i"><use href="#ant"/></svg></span><span class="c w12"></span><span class="s w28"><svg class="i"><use href="#ruler"/></svg></span><span class="c cl w16"></span>
    <span class="sep w2"></span><span class="grip w8"></span>
    <span class="s w28"><svg class="i"><use href="#fit"/></svg></span><span class="c w16"></span><span class="s w26"><svg class="i"><use href="#laptop"/></svg></span><span class="c w18"></span>
    <span class="s w24"><svg class="i"><use href="#cube"/></svg></span><span class="c w20"></span>
    <span class="s w20"><svg class="i"><use href="#sec1"/></svg></span><span class="s w40"><svg class="i"><use href="#sec2"/></svg></span><span class="c w8"></span>
    <span class="s w34"><svg class="i"><use href="#rect"/></svg></span><span class="c w10"></span>
    <span class="sep w8"></span>
    <span class="s w28"><svg class="i"><use href="#cl1"/></svg></span><span class="s w34"><svg class="i"><use href="#cl2"/></svg></span><span class="c cl w6"></span>
    <span class="w4"></span>
  </div>
</div>

<div class="row r34">
  <div class="bar">
    <span class="grip w7"></span>
    <span class="s w26"><svg class="i"><use href="#plane"/></svg></span><span class="c w16"></span>
    <span class="s w24"><svg class="i"><use href="#ext"/></svg></span><span class="s w42"><svg class="i"><use href="#rev"/></svg></span><span class="s w20"><svg class="i"><use href="#hole"/></svg></span><span class="s w42"><svg class="i"><use href="#boss"/></svg></span><span class="s w20"><svg class="i"><use href="#pocket"/></svg></span>
    <span class="w6"></span>
    <span class="sep w2"></span>
    <span class="s w34"><svg class="i"><use href="#emb"/></svg></span><span class="s w28"><svg class="i"><use href="#pads"/></svg></span><span class="s w34"><svg class="i"><use href="#move"/></svg></span><span class="s w28"><svg class="i"><use href="#unite"/></svg></span><span class="c w16"></span>
    <span class="s w26"><svg class="i"><use href="#trim"/></svg></span><span class="s w38"><svg class="i"><use href="#swp"/></svg></span><span class="s w26"><svg class="i"><use href="#sweep"/></svg></span><span class="s w36"><svg class="i"><use href="#split"/></svg></span><span class="s w22"><svg class="i"><use href="#shell"/></svg></span><span class="s w38"><svg class="i"><use href="#thk"/></svg></span>
    <span class="sep w2"></span>
    <span class="s w32"><svg class="i"><use href="#box1"/></svg></span><span class="s w32"><svg class="i"><use href="#fl1"/></svg></span><span class="s w30"><svg class="i"><use href="#fl2"/></svg></span><span class="s w32"><svg class="i"><use href="#chm"/></svg></span><span class="s w30"><svg class="i"><use href="#draft"/></svg></span><span class="s w32"><svg class="i"><use href="#poly"/></svg></span><span class="c cl w12"></span>
    <span class="sep w2"></span><span class="grip w10"></span>
    <span class="s w24"><svg class="i"><use href="#pmove"/></svg></span><span class="c w22"></span><span class="s w22"><svg class="i"><use href="#ptri"/></svg></span><span class="c w20"></span><span class="s w20"><svg class="i"><use href="#px"/></svg></span><span class="s w40"><svg class="i"><use href="#pcopy"/></svg></span><span class="c w8"></span><span class="s w32"><svg class="i"><use href="#psq"/></svg></span><span class="c w14"></span><span class="s w26"><svg class="i"><use href="#pdim"/></svg></span><span class="c w20"></span><span class="s w20"><svg class="i"><use href="#pfr"/></svg></span><span class="s w38"><svg class="i"><use href="#pwire"/></svg></span><span class="c cl w10"></span>
    <span class="sep w8"></span><span class="grip w4"></span>
    <span class="s w30"><svg class="i"><use href="#s1"/></svg></span><span class="s w32"><svg class="i"><use href="#s2"/></svg></span><span class="s w28"><svg class="i"><use href="#s3"/></svg></span><span class="s w34"><svg class="i"><use href="#s4"/></svg></span><span class="s w28"><svg class="i"><use href="#s5"/></svg></span><span class="s w36"><svg class="i"><use href="#s6"/></svg></span><span class="s w26"><svg class="i"><use href="#s7"/></svg></span><span class="c w16"></span><span class="c cl w8"></span>
    <span class="w4"></span>
  </div>
</div>

<div class="row r31 pl6">
  <div class="sel w142"><span>没有选择过滤器</span><i></i></div>
  <span class="w9"></span>
  <div class="sel w150"><span>整个装配</span><i></i></div>
  <span class="s w30 sm20"><svg class="i"><use href="#copy"/></svg></span>
  <span class="sep w4"></span>
  <span class="s w24 sm20"><svg class="i"><use href="#funnel"/></svg></span><span class="s w20 sm16"><svg class="i"><use href="#fbox"/></svg></span><span class="c w6"></span><span class="s w32 sm20"><svg class="i"><use href="#cross"/></svg></span><span class="s w12 sm20"><svg class="i"><use href="#pipe"/></svg></span>
  <span class="sep w16"></span>
  <span class="s w16 sm20"><svg class="i"><use href="#dash"/></svg></span><span class="c w18"></span>
  <span class="sep w2"></span>
  <span class="s w22 sm20"><svg class="i"><use href="#gbox"/></svg></span><span class="s w26 sm20"><svg class="i"><use href="#bbox"/></svg></span>
  <span class="sep w6"></span>
  <span class="s w22"><span class="tb"><svg class="j"><use href="#all"/></svg></span></span>
  <span class="s w20 sm20"><svg class="i"><use href="#all2"/></svg></span>
  <span class="w4"></span>
  <span class="s w22"><span class="tb"><svg class="j"><use href="#lnA"/></svg></span></span>
  <span class="s w22"><span class="tb"><svg class="j"><use href="#lnM"/></svg></span></span>
  <span class="s w24 sm20"><svg class="i"><use href="#crv"/></svg></span><span class="s w24 sm20"><svg class="i"><use href="#arc"/></svg></span>
  <span class="s w22"><span class="tb"><svg class="j"><use href="#cen"/></svg></span></span>
  <span class="s w22 sm20"><svg class="i"><use href="#qua"/></svg></span>
  <span class="s w24"><span class="tb"><svg class="j"><use href="#isc"/></svg></span></span>
  <span class="s w22"><span class="tb"><svg class="j"><use href="#lnM"/></svg></span></span>
  <span class="s w24 sm20"><svg class="i"><use href="#fac"/></svg></span>
  <span class="sep w6"></span>
  <span class="s w22 sm16"><svg class="i"><use href="#grid"/></svg></span>
  <span class="c end"></span>
</div>

<div class="status">
  <span class="st1"></span><span class="st2"></span><span class="st3"></span>
  <span class="st4"><svg class="j"><use href="#flag"/></svg><svg class="j"><use href="#frame"/></svg></span>
</div>

<main class="main">
  <aside class="rail">
    <div class="tabs">
      <span class="tab tH39 m18"><svg class="ri"><use href="#t1"/></svg></span>
      <span class="tab tH39 m3"><svg class="ri"><use href="#t2"/></svg></span>
      <span class="tab act"><svg class="ri"><use href="#t3"/></svg></span>
      <span class="tab tH39 m1"><svg class="ri"><use href="#t4"/></svg></span>
      <span class="tab tH39 m14"><svg class="ri"><use href="#t5"/></svg></span>
      <span class="tab tH39 m15"><svg class="ri"><use href="#t6"/></svg></span>
      <span class="tab tH39 m15"><svg class="ri"><use href="#t7"/></svg></span>
      <span class="tab tH39 m3"><svg class="ri"><use href="#t8"/></svg></span>
      <span class="tab tH39 m3"><svg class="ri"><use href="#t9"/></svg></span>
      <span class="tab tH39 m3"><svg class="ri"><use href="#t10"/></svg></span>
    </div>
    <div class="rsc">
      <span class="rb top"></span><span class="rb up"></span><span class="rb dn"></span><span class="rb bot"></span>
    </div>
  </aside>
  <section class="panel">
    <div class="ph"><svg class="ni"><use href="#nav"/></svg><b>部件导航器</b></div>
    <div class="tree">
      <div class="th"><span>名称</span><i></i></div>
      <div class="tb2">
        <div class="nr"><span class="ex none"></span><svg class="ti16"><use href="#tc"/></svg><span>历史记录模式</span></div>
        <div class="nr"><span class="ex">+</span><svg class="ti16"><use href="#view3"/></svg><span>模型视图</span></div>
        <div class="nr"><span class="ex">+</span><span class="tick">✔</span><svg class="ti16 n3"><use href="#cam"/></svg><span>摄像机</span></div>
        <div class="nr"><span class="ex">+</span><svg class="ti16"><use href="#fldexp"/></svg><span>用户表达式</span></div>
        <div class="nr"><span class="ex">−</span><svg class="ti16"><use href="#folder"/></svg><span>模型历史记录</span></div>
        <div class="nr ch"><span class="cb">✔</span><svg class="ti16"><use href="#datum"/></svg><span>基准坐标系 <em>(0)</em></span></div>
        <div class="nr ch"><span class="cb">✔</span><svg class="ti16"><use href="#ext"/></svg><span>拉伸 <em>(1)</em></span></div>
        <div class="nr ch"><span class="cb">✔</span><svg class="ti16"><use href="#split2"/></svg><span>分割面 <em>(2)</em></span></div>
        <div class="nr ch"><span class="cb">✔</span><svg class="ti16"><use href="#draft"/></svg><span>拔模 <em>(3)</em></span></div>
        <div class="nr"></div><div class="nr"></div><div class="nr"></div><div class="nr"></div><div class="nr"></div><div class="nr"></div><div class="nr"></div><div class="nr"></div><div class="nr"></div>
        <svg class="conn" width="60" height="180" viewBox="44 222 60 180"><path d="M53.500 232V308M53.500 232H62M58 252H62M58 272H63M58 292H62M58 312H62M72.500 320V392M72.500 332H84M72.500 352H84M72.500 372H84M72.500 392H84" fill="none" stroke="#999" stroke-dasharray="1 1"/></svg>
      </div>
      <div class="hs"><span class="ha l"></span><span class="thumb">|||</span><span class="ha r"></span></div>
    </div>
    <div class="sash"><i></i><b></b><i></i></div>
    <div class="acc"><div class="ai"><b>相依性</b><span class="ac"></span></div><div class="ai"><b>细节</b><span class="ac"></span></div><div class="ai"><b>预览</b><span class="ac"></span></div></div>
  </section>
  <div class="view">
    <svg class="scene" width="1118" height="524" viewBox="248 170 1118 524">
      <path d="M727 284 832 346 784 687 679 628z" fill="#bd7000"/>
      <path d="M832 297 936 237V600L784 687 832 346z" fill="#ba6e00"/>
      <path d="M727 237 832 297V346L727 285z" fill="#a36100"/>
      <path d="M831 177 936 237 832 297 727 237z" fill="#ffc800"/>
      <path d="M831 177 936 237 832 297 727 237zM727 237V285L679 628 784 687 936 600V237M832 297V346L784 687M727 285 832 346" fill="none" stroke="#3a2c10" stroke-width=".8"/>
      <path d="M831 238V285M831 285 913 237M831 285 879 312 927 285 879 257M879 203V312" fill="none" stroke="#e8d8a8" stroke-width="1.300"/>
      <path d="M831 238V180" stroke="#0000e0" stroke-width="1.200"/>
      <path d="M831 178 834 190H828z" fill="#0000e0"/>
      <path d="M831 230 879 203M831 230 879 257M879 312 920 336" stroke="#2020f0" stroke-dasharray="2 1"/>
      <path d="M926 340 914 337 918 331z" fill="#0000e0"/>
      <path d="M926 231 915 234 915 239z" fill="#eee"/>
      <text class="ax" x="827" y="181">Z</text><text class="ax" x="926" y="233">Y</text><text class="ax" x="926" y="348">X</text>
      <path d="M309 621 323 629V644L309 652 295 644V629z" fill="#9a9a9a"/>
      <path d="M295 629 309 636 323 629M309 636V652" stroke="#b8b8b8" fill="none"/>
      <path d="M309 636 324 627" stroke="#3a8a3a"/>
      <path d="M295 645V625" stroke="#1040d0" stroke-width="2.500"/><path d="M295 618 299 628H291z" fill="#1040d0"/>
      <path d="M295 645 318 659" stroke="#c83030" stroke-width="2.500"/>
      <circle cx="295" cy="645" r="4" fill="#ddd"/>
      <text class="tz" x="291" y="620">Z</text><text class="tx" x="316" y="664">X</text>
    </svg>
  </div>
</main>

<footer class="row bottom">
  <div class="bar">
    <span class="grip w7"></span>
    <span class="s w28"><svg class="i"><use href="#bfind"/></svg></span><span class="c w14"></span>
    <span class="s w28"><svg class="i"><use href="#blk"/></svg></span><span class="s w34"><svg class="i"><use href="#grp"/></svg></span><span class="s w26"><svg class="i"><use href="#plus2"/></svg></span><span class="c w20"></span>
    <span class="s w24"><svg class="i"><use href="#ymove"/></svg></span><span class="s w36"><svg class="i"><use href="#mir"/></svg></span><span class="s w26"><svg class="i"><use href="#asm"/></svg></span>
    <span class="sep w10"></span>
    <span class="s w28"><svg class="i"><use href="#wren"/></svg></span><span class="s w32"><svg class="i"><use href="#tri"/></svg></span><span class="s w32"><svg class="i"><use href="#stp"/></svg></span>
    <span class="sep w6"></span>
    <span class="s w28"><svg class="i"><use href="#hexd"/></svg></span>
    <span class="sep w12"></span>
    <span class="s w24"><svg class="i"><use href="#link"/></svg></span><span class="s w38"><svg class="i"><use href="#flt"/></svg></span><span class="s w28"><svg class="i"><use href="#tree"/></svg></span>
    <span class="sep w6"></span>
    <span class="s w30"><svg class="i"><use href="#two"/></svg></span><span class="c w6"></span><span class="c cl w16"></span>
  </div>
</footer>

<svg class="mark" width="306" height="108" viewBox="1060 620 306 108">
  <defs>
    <clipPath id="upper"><path d="M1060 620h306v74h-306z"/></clipPath>
    <clipPath id="lower"><path d="M1060 694h306v34h-306z"/></clipPath>
  </defs>
  <g clip-path="url(#upper)">
    <path d="M1107 625 1149 649V698L1107 722 1065 698V649z" fill="#1b4d89"/>
    <path d="M1122 634 1149 649V698L1107 722 1090 712C1120 712 1135 670 1122 634z" fill="#1e7ba3"/>
  </g>
  <g clip-path="url(#lower)">
    <path d="M1107 625 1149 649V698L1107 722 1065 698V649z" fill="#6a9fd8"/>
    <path d="M1085 694H1149V698L1107 722 1090 712z" fill="#66c0ea"/>
  </g>
  <path d="M1107 625 1149 649V698L1107 722 1065 698V649z" fill="none" stroke="#b8c0c8" stroke-width="1.500"/>
  <path d="M1107 654 1128 666V690L1107 702 1086 690V666z" fill="#1b4d89" stroke="#c4c8cc" stroke-width="3"/>
  <path d="M1107 678 1128 666V690L1107 702z" fill="#1e7ba3"/>
  <path d="M1086 666 1107 678 1128 666M1107 678V702" fill="none" stroke="#c4c8cc" stroke-width="2"/>
  <text class="m1" x="1158" y="686" textLength="200" lengthAdjust="spacingAndGlyphs">3D世界网</text>
  <text class="m2" x="1160" y="704" textLength="195" lengthAdjust="spacingAndGlyphs">WWW.3DSJW.COM</text>
</svg>
</div>
</body>
</html>
```
FILE: styles.css
```css
*{box-sizing:border-box}
html,body{margin:0;padding:0;height:728px;overflow:hidden;background:#e0e0e0}
body{font:12px/1 "Liberation Sans","Noto Sans CJK SC",sans-serif;color:#111}
.defs{width:0;height:0;display:block;overflow:hidden}
.app{position:relative;width:1366px;height:728px;display:flex;flex-direction:column;overflow:hidden}

/* title bar */
.title{height:22px;flex:none;display:flex;align-items:center;background:linear-gradient(#8f8f8f 0,#6d6d6d 2px,#2a2a2a 5px,#1c1c1c 8px,#161616 100%);color:#fff;padding-left:3px}
.ti{width:17px;height:17px;margin-right:4px}
.tt{font-size:13px;flex:1;color:#f4f4f4;white-space:pre}
.sm{font:bold 12px "Liberation Sans",sans-serif;letter-spacing:1.1px;margin-right:26px;color:#f0f0f0}
.wb{display:flex;gap:3px;align-self:flex-start;height:19px;margin-top:1px}
.wbtn{width:19px;height:19px;border-radius:3px;background:linear-gradient(#666,#333);border:1px solid #777;position:relative;display:flex;align-items:center;justify-content:center;font-size:13px;color:#fff;font-weight:bold}
.wcl{width:20px;background:linear-gradient(#f07860,#d83820);border-color:#e88}
.wmin::after{content:"";position:absolute;left:5px;bottom:3px;width:7px;height:3px;background:#fff}
.wres::after{content:"";position:absolute;left:4px;top:5px;width:7px;height:6px;border:1px solid #fff;border-top-width:2px}
.wres::before{content:"";position:absolute;left:7px;top:3px;width:7px;height:6px;border:1px solid #fff;border-top-width:2px}

/* menu */
.menu{height:27px;flex:none;display:flex;align-items:center;background:linear-gradient(#ececec,#dadada);border-bottom:1px solid #f4f4f4;box-shadow:inset 0 -1px 0 #bdbdbd}
.mi{width:16px;height:16px;margin-right:5px}
.ms{display:flex;gap:10.5px;flex:1;white-space:nowrap}
.ms u{text-underline-offset:1px}
.mdi{display:flex;gap:2px;margin-right:5px}
.mb{width:17px;height:17px;border:1px solid #999;border-radius:4px;background:linear-gradient(#fafafa,#d8d8d8);font-size:11px;color:#666;display:flex;align-items:center;justify-content:center;font-weight:bold}

/* toolbar rows */
.row{flex:none;display:flex;align-items:center;background:#e6e6e6}
.r34{height:34px;align-items:stretch}
.r31{height:31px;border-bottom:1px solid #bfbfbf;box-shadow:inset 0 -1px 0 #f2f2f2;background:linear-gradient(#e2e2e2,#d8d8d8);position:relative}
.pl6{padding-left:6px}
.bar{display:flex;align-items:center;padding-left:3px;background:linear-gradient(#e6e6e6,#d4d4d4);border-bottom:1px solid #b8b8b8;border-right:1px solid #c6c6c6;box-shadow:inset 0 1px 0 #f4f4f4}
.s,.c,.sep,.grip,.lb{flex:none;display:flex;align-items:center;justify-content:center;height:100%}
.s{height:28px}
.i{width:24px;height:24px;flex:none}
.j{width:18px;height:18px;flex:none}
.sm20 .i{width:20px;height:20px}
.sm16 .i{width:18px;height:18px}
.lb{font-size:12px;white-space:nowrap;height:auto}
.c{height:28px;position:relative}
.c::after{content:"";width:0;height:0;border:4px solid transparent;border-top-color:#111;border-bottom:0}
.cl{align-items:flex-end;padding-bottom:3px}
.c.end{position:absolute;right:4px;top:16px;height:8px}
.sep{height:28px;background:linear-gradient(90deg,#bcbcbc 0,#bcbcbc 1px,#fafafa 1px,#fafafa 2px) center/2px 100% no-repeat}
.grip{height:24px;background:radial-gradient(circle at 1px 1px,#8a8a8a 1px,transparent 1.200px) 2px 0/3px 3px repeat-y}
.w2{width:2px}.w4{width:4px}.w6{width:6px}.w7{width:7px}.w8{width:8px}.w9{width:9px}.w10{width:10px}.w12{width:12px}.w14{width:14px}.w16{width:16px}.w18{width:18px}.w20{width:20px}.w22{width:22px}.w24{width:24px}.w26{width:26px}.w28{width:28px}.w30{width:30px}.w32{width:32px}.w34{width:34px}.w36{width:36px}.w38{width:38px}.w40{width:40px}.w42{width:42px}.w60{width:60px}.w142{width:142px}.w150{width:150px}
span.w2,span.w4,span.w6,span.w9{flex:none}

/* filter row */
.sel{height:20px;flex:none;display:flex;align-items:center;justify-content:space-between;background:#fff;border:1px solid #8a8a8a;border-radius:3px;padding-left:2px;font-size:12px}
.sel i{width:18px;height:18px;background:linear-gradient(#e8f0ff,#6a94d8);border:1px solid #4a70b0;border-radius:2px;position:relative;display:block}
.sel i::after{content:"";position:absolute;left:3px;top:6px;border:5px solid transparent;border-top-color:#111;border-bottom:0}
.tb{width:22px;height:22px;flex:none;background:#fff;border:1px solid #666;border-radius:3px;display:flex;align-items:center;justify-content:center}

/* status */
.status{height:22px;flex:none;display:flex;background:linear-gradient(#dfdfdf,#d8d8d8)}
.st1{width:634px;border-right:1px solid #f6f6f6}
.st2{width:634px;border-right:1px solid #f6f6f6}
.st3{width:20px;border-right:1px solid #f6f6f6}
.st4{flex:1;display:flex;align-items:center;justify-content:flex-end;gap:2px;padding-right:2px}

/* main */
.main{flex:1;display:flex;min-height:0}
.rail{width:33px;flex:none;background:linear-gradient(90deg,#a8a8a8,#9c9c9c 85%,#777);display:flex;flex-direction:column}
.tabs{height:452px;flex:none;overflow:hidden;display:flex;flex-direction:column;align-items:flex-end}
.tab{flex:none;width:27px;background:linear-gradient(90deg,#f2f2f2,#d8d8d8);border:1px solid #8c8c8c;border-right:0;border-radius:5px 0 0 5px;display:flex;align-items:center;justify-content:center}
.tH39{height:39px}
.act{width:29px;height:44px;background:#f6f6f6}
.m18{margin-top:18px}.m3{margin-top:3px}.m1{margin-top:1px}.m14{margin-top:14px}.m15{margin-top:15px}
.ri{width:24px;height:24px}
.rsc{display:flex;flex-direction:column;align-items:center;gap:1px;padding:5px 0 0 3px;background:#a8a8a8;flex:1}
.rb{width:16px;height:15px;background:#ddd;border:1px solid #eee;box-shadow:0 0 0 1px #999 inset;position:relative;display:block}
.rb::after{content:"";position:absolute;left:3px;top:4px;border:4px solid transparent}
.top::after,.up::after{border-bottom-color:#aaa;border-top:0}
.dn::after,.bot::after{border-top-color:#444;border-bottom:0;top:5px}

.panel{width:215px;flex:none;background:#ededed;padding-left:10px;padding-right:10px;display:flex;flex-direction:column;border-top:1px solid #fff}
.ph{height:31px;flex:none;display:flex;align-items:center;padding-left:5px;font-size:12px;padding-bottom:1px}
.ni{width:13px;height:13px;margin-right:11px}
.tree{height:405px;flex:none;width:195px;border:1px solid #777;background:#fff;display:flex;flex-direction:column}
.th{height:19px;flex:none;display:flex;align-items:center;padding-left:6px;background:linear-gradient(#e2e2e2,#cfcfcf);border-bottom:1px solid #eee;font-size:12px}
.th i{margin-left:15px;border:5px solid transparent;border-bottom-color:#111;border-top:0}
.tb2{position:relative;flex:1;overflow:hidden;min-height:0}
.nr{height:20px;display:flex;align-items:center;padding-left:4px;padding-top:1px;border-bottom:1px solid #e6e6e6;font-size:12px;white-space:nowrap;color:#222;position:relative}
.nr:nth-child(even){background:#f6f6f6}
.nr.ch{padding-left:40px}
.ex{width:10px;height:10px;flex:none;border:1px solid #888;background:#fff;font-size:9px;line-height:8px;text-align:center;margin-right:5px;color:#222;border-radius:1px;position:relative;z-index:1}
.ex.none{border:0;background:none}
.ti16{width:16px;height:16px;margin-right:3px;flex:none;position:relative;z-index:1}
.n3{margin-left:0}
.tick{width:16px;color:#10b030;font-size:15px;font-weight:bold;flex:none;font-family:"DejaVu Sans",sans-serif;text-align:center;position:relative;z-index:1}
.cb{width:12px;height:12px;border:1px solid #111;background:#fff;color:#10b030;font:bold 12px/10px "DejaVu Sans",sans-serif;text-align:center;flex:none;margin-right:1px;position:relative;z-index:1}
.ch .ti16{margin-right:3px}
em{font-style:normal;color:#2a70b8;margin-left:2px}
.conn{position:absolute;left:0;top:0}
.hs{height:17px;flex:none;display:flex;align-items:center;background:#f2f2f2;position:relative;padding:0 2px}
.thumb{position:absolute;left:18px;width:100px;height:15px;top:1px;background:linear-gradient(#f0f0f0,#c8c8c8);border:1px solid #999;border-radius:2px;font-size:9px;text-align:center;line-height:13px;color:#666}
.ha{position:absolute;top:4px;border:4px solid transparent}
.ha.l{left:5px;border-right-color:#333;border-left:0}
.ha.r{right:5px;border-left-color:#333;border-right:0}
.sash{height:13px;flex:none;display:flex;align-items:center;gap:4px;margin:0 0 0 -1px}
.sash i{flex:1;height:2px;background:#fff;border-top:1px solid #ccc}
.sash b{width:32px;height:6px;background:#d0d0d0;border:1px solid #aaa}
.acc{display:flex;flex-direction:column;gap:1px;margin-top:1px}
.ai{height:22px;display:flex;align-items:center;justify-content:space-between;background:linear-gradient(#f6f6f6 40%,#e0e0e0 60%,#d2d2d2);border-bottom:1px solid #8a8a8a;padding-left:6px;font-size:13px}
.ac{width:23px;height:100%;border-left:1px solid #fff;box-shadow:-1px 0 0 #999;position:relative;display:block}
.ac::after{content:"";position:absolute;left:5px;top:6px;width:12px;height:10px;background:#666;clip-path:polygon(0 0,3px 0,6px 6px,9px 0,12px 0,6px 10px)}

.view{flex:1;background:#000;min-width:0;overflow:hidden}
.scene{display:block}
.ax{font:13px "Liberation Sans",sans-serif;fill:#1010f0}
.tz{font:bold 12px "Liberation Sans",sans-serif;fill:#1040d0}
.tx{font:12px "Liberation Sans",sans-serif;fill:#c83030}

.bottom{height:34px;align-items:stretch;background:linear-gradient(#e8e8e8,#d4d4d4)}
.bottom .bar{border-bottom:0}

.mark{position:absolute;right:0;bottom:0;display:block}
.m1{font:bold 44px "Noto Sans CJK SC",sans-serif;fill:#2079a5;stroke:#dfe3e6;stroke-width:2px;paint-order:stroke}
.m2{font:bold 13px "DejaVu Sans",sans-serif;fill:#68c2ec;stroke:#f4f8fa;stroke-width:2px;paint-order:stroke}
```
